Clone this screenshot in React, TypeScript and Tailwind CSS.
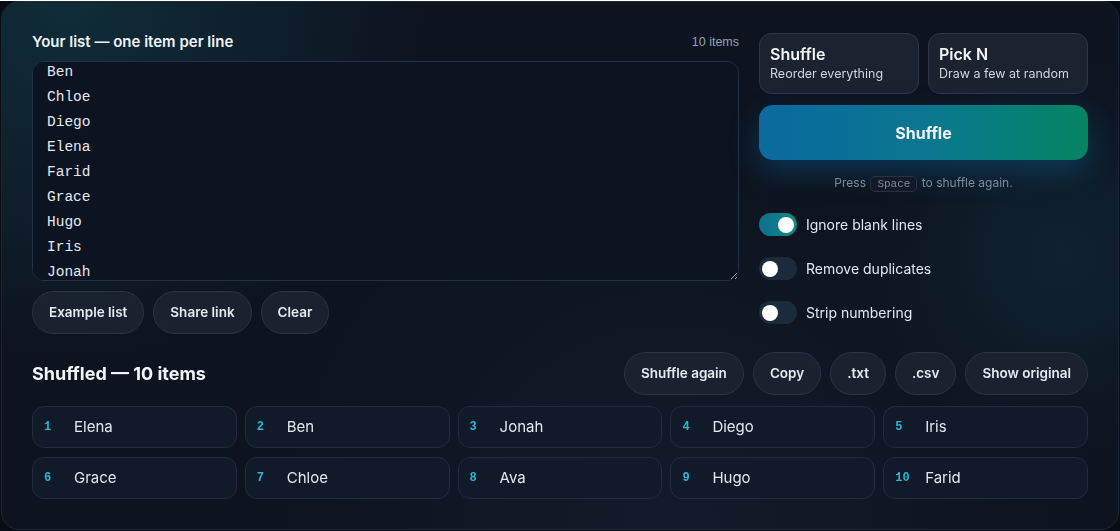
import React, { useEffect, useRef, useState } from 'react';

const source = ['Ava', 'Ben', 'Chloe', 'Diego', 'Elena', 'Farid', 'Grace', 'Hugo', 'Iris', 'Jonah'];
const shuffled = ['Elena', 'Ben', 'Jonah', 'Diego', 'Iris', 'Grace', 'Chloe', 'Ava', 'Hugo', 'Farid'];

const pill =
  'h-[43px] px-4 rounded-full bg-[#1a2230] border border-[#2a3445] text-[13.5px] font-semibold text-[#e5e9f0] hover:bg-[#222c3c]';

const Toggle: React.FC<{ on: boolean; label: string; onChange: () => void }> = ({ on, label, onChange }) => (
  <button onClick={onChange} className="flex items-center gap-[9px] h-[23px] text-left">
    <span
      className={
        on
          ? 'relative w-[38px] h-[23px] rounded-full bg-gradient-to-r from-[#0e6f8e] to-[#0f8a80]'
          : 'relative w-[38px] h-[23px] rounded-full bg-[#1c2b3c]'
      }
    >
      <span
        className={
          on
            ? 'absolute top-[3.5px] left-[19px] w-4 h-4 rounded-full bg-white'
            : 'absolute top-[3.5px] left-[3px] w-4 h-4 rounded-full bg-white'
        }
      />
    </span>
    <span className="text-[14px] text-[#e2e8f0]">{label}</span>
  </button>
);

const App: React.FC = () => {
  const listRef = useRef<HTMLTextAreaElement>(null);
  const [mode, setMode] = useState<'shuffle' | 'pick'>('shuffle');
  const [opts, setOpts] = useState({ blank: true, dupes: false, numbering: false });

  useEffect(() => {
    if (listRef.current) listRef.current.scrollTop = 39;
  }, []);

  return (
    <div className="w-full h-[531px] bg-[#080d15] font-['Inter','Noto_Sans',sans-serif] text-[#e5e9f0]">
      <div className="relative h-[529px] w-[1118px] ml-px mt-px rounded-[18px] border border-[#1c2738] overflow-hidden bg-[#0d1420]">
        {/* background glows */}
        <div className="absolute inset-0 bg-[radial-gradient(circle_at_6%_0%,rgba(20,110,120,0.28),transparent_30%)]" />
        <div className="absolute inset-0 bg-[radial-gradient(circle_at_95%_48%,rgba(20,90,100,0.22),transparent_18%)]" />
        <div className="absolute inset-0 bg-[radial-gradient(circle_at_60%_100%,rgba(30,40,60,0.35),transparent_45%)]" />

        <div className="relative px-[30px] pt-[30px] pb-[30px] flex flex-col">
          <div className="flex gap-5">
            {/* input column */}
            <div className="w-[707px] flex flex-col">
              <div className="flex items-center justify-between h-[20px]">
                <label className="text-[15px] font-semibold text-[#eef2f7] leading-[20px]">
                  Your list — one item per line
                </label>
                <span className="text-[12.5px] text-[#96a0b0] font-['Liberation_Sans',sans-serif] leading-[20px]">
                  10 items
                </span>
              </div>
              <textarea
                ref={listRef}
                defaultValue={source.join('\n')}
                spellCheck={false}
                className="mt-[9px] h-[220px] w-full resize-y rounded-xl border border-[#243044] bg-[#0c1422] px-[14px] py-3 font-['Liberation_Mono',monospace] text-[14.5px] leading-[25px] text-[#e5e9f0] outline-none"
              />
              <div className="mt-[10px] flex gap-[9px]">
                <button className={pill}>Example list</button>
                <button className={pill}>Share link</button>
                <button className={pill}>Clear</button>
              </div>
            </div>

            {/* controls column */}
            <div className="w-[329px] flex flex-col pt-px">
              <div className="grid grid-cols-2 gap-[9px]">
                <button
                  onClick={() => setMode('shuffle')}
                  className="h-[61px] rounded-xl border border-[#2c3647] bg-[#1b2230] px-[10px] text-left"
                >
                  <div className="text-[16px] font-semibold leading-[20px] text-[#f1f4f8]">Shuffle</div>
                  <div className="text-[12.5px] leading-[18px] text-[#cfd6e0] mt-[1px]">Reorder everything</div>
                </button>
                <button
                  onClick={() => setMode('pick')}
                  className="h-[61px] rounded-xl border border-[#2c3647] bg-[#1b2230] px-[10px] text-left"
                >
                  <div className="text-[16px] font-semibold leading-[20px] text-[#f1f4f8]">Pick N</div>
                  <div className="text-[12.5px] leading-[18px] text-[#cfd6e0] mt-[1px]">Draw a few at random</div>
                </button>
              </div>

              <button className="mt-[11px] h-[55px] rounded-[14px] bg-gradient-to-r from-[#0c6a9e] via-[#0b7690] to-[#078462] text-[16px] font-bold text-[#f4f7fa] shadow-[0_12px_28px_rgba(12,90,140,0.45)]">
                {mode === 'shuffle' ? 'Shuffle' : 'Pick'}
              </button>

              <p className="mt-[14px] text-center text-[12px] text-[#7f8a9c] leading-[18px]">
                Press{' '}
                <kbd className="mx-[1px] rounded-[5px] border border-[#273246] bg-[#121a27] px-[6px] py-[1px] font-['Liberation_Mono',monospace] text-[11px]">
                  Space
                </kbd>{' '}
                to shuffle again.
              </p>

              <div className="mt-[20px] flex flex-col gap-[21px]">
                <Toggle on={opts.blank} label="Ignore blank lines" onChange={() => setOpts({ ...opts, blank: !opts.blank })} />
                <Toggle on={opts.dupes} label="Remove duplicates" onChange={() => setOpts({ ...opts, dupes: !opts.dupes })} />
                <Toggle
                  on={opts.numbering}
                  label="Strip numbering"
                  onChange={() => setOpts({ ...opts, numbering: !opts.numbering })}
                />
              </div>
            </div>
          </div>

          {/* result */}
          <div className="mt-[18px] flex items-center justify-between">
            <h2 className="text-[18px] font-bold text-[#f1f4f8]">Shuffled — 10 items</h2>
            <div className="flex gap-[9px]">
              <button className={pill}>Shuffle again</button>
              <button className={pill}>Copy</button>
              <button className={pill}>.txt</button>
              <button className={pill}>.csv</button>
              <button className={pill}>Show original</button>
            </div>
          </div>

          <ol className="mt-[11px] grid grid-cols-5 gap-x-2 gap-y-[9px]">
            {shuffled.map((name, i) => (
              <li
                key={name}
                className="h-[42px] flex items-center rounded-xl border border-[#222c3c] bg-[#111a28] pl-[11px]"
              >
                <span className="w-[30px] font-['Liberation_Mono',monospace] text-[12px] font-bold text-[#2fb3d1]">
                  {i + 1}
                </span>
                <span className="text-[15px] text-[#e2e8f0]">{name}</span>
              </li>
            ))}
          </ol>
        </div>
      </div>
    </div>
  );
};

export default App;
